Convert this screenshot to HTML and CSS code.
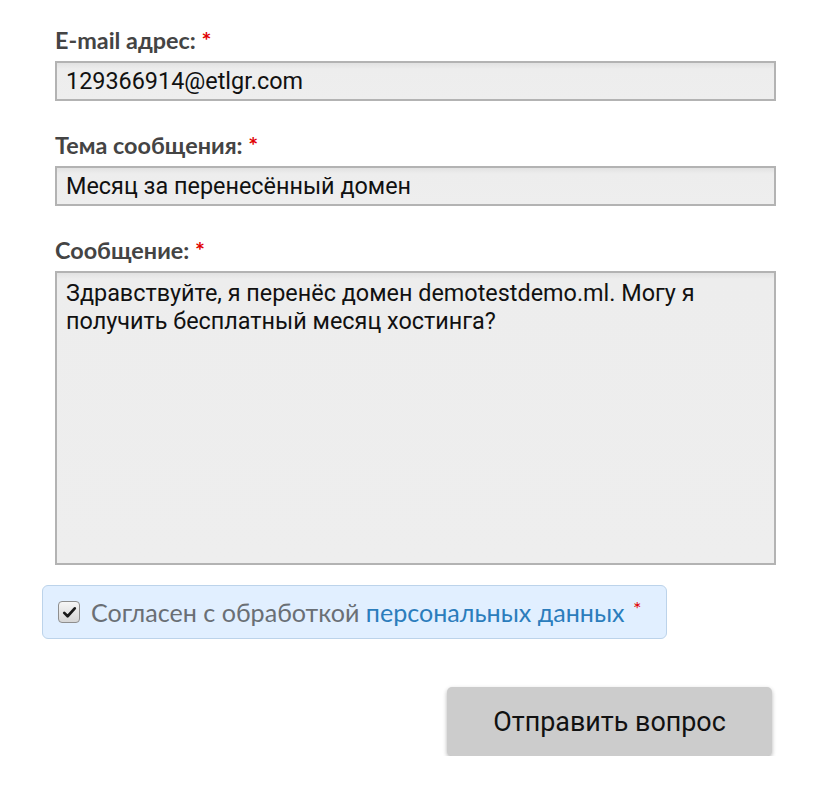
FILE: index.html
```html
<!DOCTYPE html>
<html lang="ru">
<head>
<meta charset="utf-8">
<link rel="stylesheet" href="styles.css">
</head>
<body>
<form class="form">
  <div class="field">
    <label class="label">E-mail адрес: <span class="req">*</span></label>
    <div class="input">129366914@etlgr.com</div>
  </div>
  <div class="field">
    <label class="label">Тема сообщения: <span class="req">*</span></label>
    <div class="input">Месяц за перенесённый домен</div>
  </div>
  <div class="field field-last">
    <label class="label">Сообщение: <span class="req">*</span></label>
    <div class="textarea">Здравствуйте, я перенёс домен demotestdemo.ml. Могу я получить бесплатный месяц хостинга?</div>
  </div>
  <div class="agree-row">
    <div class="agree">
      <span class="check"><svg viewBox="0 0 20 20" width="15" height="15"><path d="M3 10.5 L7.5 15 L17 4.5" fill="none" stroke="#1a1a1a" stroke-width="3.6" stroke-linecap="round" stroke-linejoin="round"/></svg></span>
      <span class="agree-text">Согласен с обработкой <a class="link">персональных данных</a> <span class="req small">*</span></span>
    </div>
  </div>
  <div class="actions">
    <button type="button" class="btn">Отправить вопрос</button>
  </div>
</form>
</body>
</html>
```
FILE: styles.css
```css
html, body {
  margin: 0;
  padding: 0;
  background: #fff;
}
.form {
  padding: 25px 50px 0 55px;
  width: 721px;
}
.field {
  margin-bottom: 29px;
}
.field-last {
  margin-bottom: 20px;
}
.label {
  display: block;
  font-family: Lato, "Liberation Sans", sans-serif;
  font-weight: 700;
  font-size: 23.4px;
  line-height: 30px;
  color: #444444;
  margin-bottom: 6px;
}
.req {
  color: #e10000;
}
.input, .textarea {
  box-sizing: border-box;
  width: 721px;
  border: 2px solid #b3b3b3;
  background: linear-gradient(#e2e2e2 0, #ededed 6px, #eeeeee 100%);
  font-family: Roboto, "Liberation Sans", sans-serif;
  font-size: 23.4px;
  color: #111;
  padding: 0 9px;
}
.input {
  height: 40px;
  line-height: 36px;
}
.textarea {
  height: 294px;
  line-height: 28px;
  padding-top: 6px;
}
.agree-row {
  margin-left: -13px;
}
.agree {
  display: inline-flex;
  align-items: center;
  box-sizing: border-box;
  height: 54px;
  padding: 0 25px 0 15px;
  background: #e1efff;
  border: 1px solid #bcd3ea;
  border-radius: 6px;
}
.check {
  box-sizing: border-box;
  width: 22px;
  height: 22px;
  border: 1px solid #8e8e8e;
  border-radius: 4px;
  background: linear-gradient(#f6f6f6, #d6d6d6);
  display: flex;
  align-items: center;
  justify-content: center;
  margin-right: 11px;
}
.agree-text {
  font-family: Lato, "Liberation Sans", sans-serif;
  font-size: 25.1px;
  color: #6a6f75;
  line-height: 30px;
  margin-top: -5px;
}
.link {
  color: #2b7dbc;
  text-decoration: none;
}
.req.small {
  font-size: 20px;
  vertical-align: 6px;
  margin-left: 2px;
}
.actions {
  display: flex;
  justify-content: flex-end;
  margin-top: 48px;
  padding-right: 4px;
}
.btn {
  width: 325px;
  height: 69px;
  background: #cccccc;
  border: none;
  border-radius: 5px;
  box-shadow: 0 2px 4px rgba(0,0,0,0.3);
  font-family: Roboto, "Liberation Sans", sans-serif;
  font-size: 26.9px;
  color: #111;
  padding: 0;
}
```
